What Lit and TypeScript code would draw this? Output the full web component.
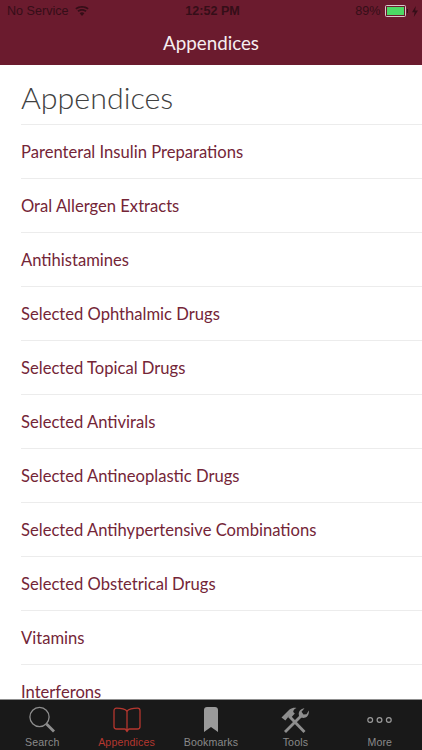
import { LitElement, html, css, svg } from "lit";
import { customElement } from "lit/decorators.js";

const ITEMS = [
  "Parenteral Insulin Preparations",
  "Oral Allergen Extracts",
  "Antihistamines",
  "Selected Ophthalmic Drugs",
  "Selected Topical Drugs",
  "Selected Antivirals",
  "Selected Antineoplastic Drugs",
  "Selected Antihypertensive Combinations",
  "Selected Obstetrical Drugs",
  "Vitamins",
  "Interferons",
];

const searchIcon = svg`<svg width="28" height="28" viewBox="0 0 28 28" fill="none" stroke="#8e8e8e"><circle cx="11.5" cy="11" r="9.6" stroke-width="1.3"/><path d="M18.5 18L26 25.5" stroke-width="2.8"/></svg>`;
const bookIcon = svg`<svg width="28" height="26" viewBox="0 0 28 26" fill="none" stroke="#b5372f" stroke-width="1.3"><path d="M14 4C12 2 9.5 1.2 3.5 1.2C2 1.2 1 2.2 1 3.7V19.5C1 21 2 22 3.5 22H11.5C13 22 13.5 22.6 14 23.5C14.5 22.6 15 22 16.5 22H24.5C26 22 27 21 27 19.5V3.7C27 2.2 26 1.2 24.5 1.2C18.5 1.2 16 2 14 4Z"/><path d="M14 4V24"/><path d="M11.8 22.6H16.2L14 25.4Z" fill="#b5372f" stroke="none"/></svg>`;
const bookmarkIcon = svg`<svg width="14" height="25" viewBox="0 0 14 25"><path d="M0 3C0 1.2 1.2 0 3 0H11C12.8 0 14 1.2 14 3V25L7 20L0 25Z" fill="#9a9a9a"/></svg>`;
const toolsIcon = svg`<svg width="28" height="26" viewBox="0 0 28 26" fill="none" stroke="#8e8e8e"><path d="M8 9L23.5 25" stroke-width="2.8"/><path d="M0.5 10.5L8.5 2.5C11 .8 13.5 .5 15.5 1C13.2 2 12.2 3.5 12.2 5L13.8 6.6L9.5 11.2L7.6 9.4L4.4 13.6Z" fill="#8e8e8e" stroke="none"/><path d="M20 9L4 25" stroke-width="2.8"/><path d="M18.5 10C16.5 6 18.5 1.8 23.5 1.2L20.5 4.8L22.5 7.6L25.5 7.2L27.8 3.6C28.4 8 25.4 11.6 21 10.8Z" fill="#8e8e8e" stroke="none"/></svg>`;
const moreIcon = svg`<svg width="25" height="8" viewBox="0 0 25 8" fill="none" stroke="#9a9a9a" stroke-width="1.2"><circle cx="3.2" cy="4" r="2.4"/><circle cx="12.5" cy="4" r="2.4"/><circle cx="21.8" cy="4" r="2.4"/></svg>`;

const TABS = [
  { label: "Search", icon: searchIcon, active: false },
  { label: "Appendices", icon: bookIcon, active: true },
  { label: "Bookmarks", icon: bookmarkIcon, active: false },
  { label: "Tools", icon: toolsIcon, active: false },
  { label: "More", icon: moreIcon, active: false },
];

@customElement("app-root")
export class AppRoot extends LitElement {
  static styles = css`
    :host {
      display: flex;
      flex-direction: column;
      width: 422px;
      height: 750px;
      overflow: hidden;
      background: #fff;
      font-family: Lato, "Liberation Sans", sans-serif;
    }
    .top {
      flex: none;
      height: 65px;
      background: #6b1b2e;
      display: flex;
      flex-direction: column;
    }
    .status {
      height: 22px;
      padding: 0 4px 0 7px;
      display: flex;
      align-items: center;
      justify-content: space-between;
      font-family: "Liberation Sans", sans-serif;
      font-size: 12.6px;
      color: #350e18;
    }
    .status > div { display: flex; align-items: center; flex: 1; }
    .status .l { gap: 6px; }
    .status .c { justify-content: center; font-weight: 700; flex: none; }
    .status .r { justify-content: flex-end; gap: 4px; }
    .battery { display: flex; align-items: center; }
    .battery .shell {
      width: 17px; height: 8px; border: 1px solid #d8c8cc; padding: 1px;
      box-sizing: content-box; border-radius: 1.5px; display: flex;
    }
    .battery .fill { width: 100%; background: #4cd964; }
    .battery .nub { width: 1.5px; height: 4px; background: #350e18; margin-left: 1px; }
    .nav {
      flex: 1;
      display: flex;
      align-items: center;
      justify-content: center;
      padding-bottom: 2px;
      color: #f6eef0;
      font-size: 18.8px;
      font-weight: 400;
    }
    .body {
      flex: 1;
      min-height: 0;
      overflow: hidden;
      padding-left: 21px;
    }
    h1 {
      margin: 0;
      height: 59px;
      box-sizing: border-box;
      padding-top: 13px;
      font-size: 30.4px;
      line-height: 38px;
      font-weight: 300;
      color: #414141;
    }
    .row {
      height: 54px;
      box-sizing: border-box;
      border-top: 1px solid #ececec;
      display: flex;
      align-items: center;
      font-size: 16.6px;
      font-weight: 400;
      line-height: 14px;
      color: #742537;
      white-space: nowrap;
    }
    .tabs {
      flex: none;
      height: 51px;
      box-sizing: border-box;
      background: #191919;
      border-top: 1px solid #8f8f8f;
      display: grid;
      grid-template-columns: repeat(5, 1fr);
    }
    .tab {
      display: flex;
      flex-direction: column;
      align-items: center;
      color: #8a8a8a;
      font-family: "Liberation Sans", sans-serif;
      font-size: 10.6px;
      letter-spacing: 0.15px;
    }
    .tab.active { color: #b5372f; }
    .icon {
      height: 33px;
      padding-top: 6px;
      box-sizing: border-box;
      display: flex;
      align-items: center;
      justify-content: center;
    }
    .label { line-height: 13px; margin-top: 3px; }
  `;

  render() {
    return html`
      <div class="top">
        <div class="status">
          <div class="l">
            <span>No Service</span>
            <svg width="14" height="10" viewBox="0 0 14 10" fill="#350e18"><path d="M7 10L4.6 7.2C6 6 8 6 9.4 7.2Z"/><path d="M3.6 6L2.4 4.6C5 2.4 9 2.4 11.6 4.6L10.4 6C8.4 4.4 5.6 4.4 3.6 6Z"/><path d="M1.5 3.6L.3 2.2C4 -.7 10 -.7 13.7 2.2L12.5 3.6C9.4 1.2 4.6 1.2 1.5 3.6Z"/></svg>
          </div>
          <div class="c">12:52 PM</div>
          <div class="r">
            <span>89%</span>
            <div class="battery"><div class="shell"><div class="fill"></div></div><div class="nub"></div></div>
            <svg width="6" height="11" viewBox="0 0 6 11" fill="#350e18"><path d="M3.8 0L0 6.2H2.6L1.8 11L6 4.4H3.2Z"/></svg>
          </div>
        </div>
        <div class="nav">Appendices</div>
      </div>
      <div class="body">
        <h1>Appendices</h1>
        ${ITEMS.map((t) => html`<div class="row">${t}</div>`)}
      </div>
      <div class="tabs">
        ${TABS.map(
          (t) => html`<div class="tab ${t.active ? "active" : ""}">
            <div class="icon">${t.icon}</div>
            <div class="label">${t.label}</div>
          </div>`
        )}
      </div>
    `;
  }
}
